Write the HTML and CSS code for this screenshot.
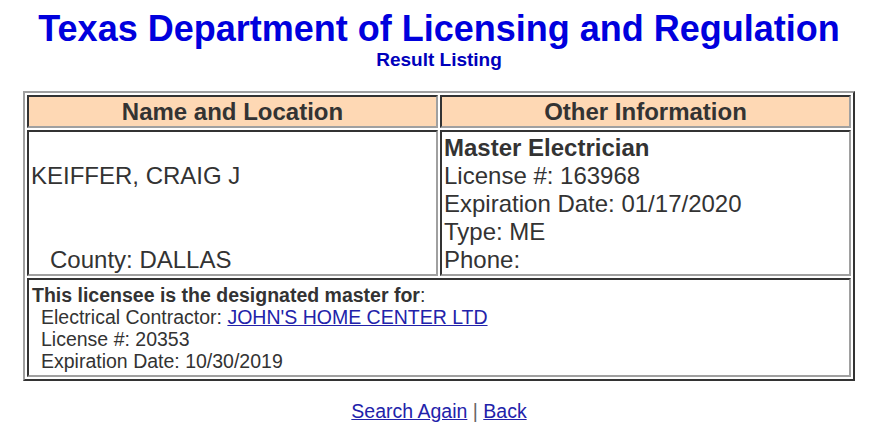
FILE: index.html
```html
<!DOCTYPE html>
<html>
<head>
    <title>Result Listing</title>
    <link rel="stylesheet" href="styles.css">
</head>
<body>
    <h1 class="agency">Texas Department of Licensing and Regulation</h1>
    <div class="subtitle">Result Listing</div>

    <table class="listing">
        <tr>
            <th class="col-head">Name and Location</th>
            <th class="col-head">Other Information</th>
        </tr>
        <tr>
            <td class="cell name-cell">
                <div class="line">&nbsp;</div>
                <div class="line">KEIFFER, CRAIG J</div>
                <div class="line">&nbsp;</div>
                <div class="line">&nbsp;</div>
                <div class="line county">County: DALLAS</div>
            </td>
            <td class="cell info-cell">
                <div class="line"><b>Master Electrician</b></div>
                <div class="line">License #: 163968</div>
                <div class="line">Expiration Date: 01/17/2020</div>
                <div class="line">Type: ME</div>
                <div class="line">Phone:</div>
            </td>
        </tr>
        <tr>
            <td class="cell master-cell" colspan="2">
                <div><b>This licensee is the designated master for</b>:</div>
                <div class="sub">Electrical Contractor: <a href="#">JOHN'S HOME CENTER LTD</a></div>
                <div class="sub">License #: 20353</div>
                <div class="sub">Expiration Date: 10/30/2019</div>
            </td>
        </tr>
    </table>

    <div class="footer-links">
        <a href="#">Search Again</a> <span class="sep">|</span> <a href="#">Back</a>
    </div>
</body>
</html>
```

FILE: styles.css
```css
body {
    margin: 8px;
    width: 862px;
    font-family: "Liberation Sans", Arial, sans-serif;
    color: #333;
    background: #fff;
}
.agency {
    margin: 0;
    padding-top: 1px;
    text-align: center;
    font-size: 36px;
    line-height: 40px;
    color: #0000dd;
}
.subtitle {
    text-align: center;
    font-size: 19px;
    font-weight: bold;
    line-height: 22px;
    color: #0000bb;
    margin-bottom: 20px;
}
.listing {
    width: 832px;
    margin: 0 auto;
    border: 2px solid;
    border-color: #a0a0a0 #333 #333 #a0a0a0;
    border-spacing: 2px;
}
.col-head,
.cell {
    border: 2px solid;
    border-color: #333 #a0a0a0 #a0a0a0 #333;
}
.col-head {
    width: 50%;
    background: #fed8b4;
    font-size: 24px;
    line-height: 27px;
    padding: 1px;
}
.cell {
    font-size: 24px;
    line-height: 28px;
    padding: 2px 2px 0;
    vertical-align: top;
}
.county {
    padding-left: 19px;
}
.master-cell {
    font-size: 19.5px;
    line-height: 22px;
    padding: 4px 3px 3px;
}
.master-cell .sub {
    padding-left: 9px;
}
a {
    color: #2222aa;
}
.footer-links {
    text-align: center;
    font-size: 19.5px;
    margin-top: 19px;
}
.sep {
    color: #666;
}
```
